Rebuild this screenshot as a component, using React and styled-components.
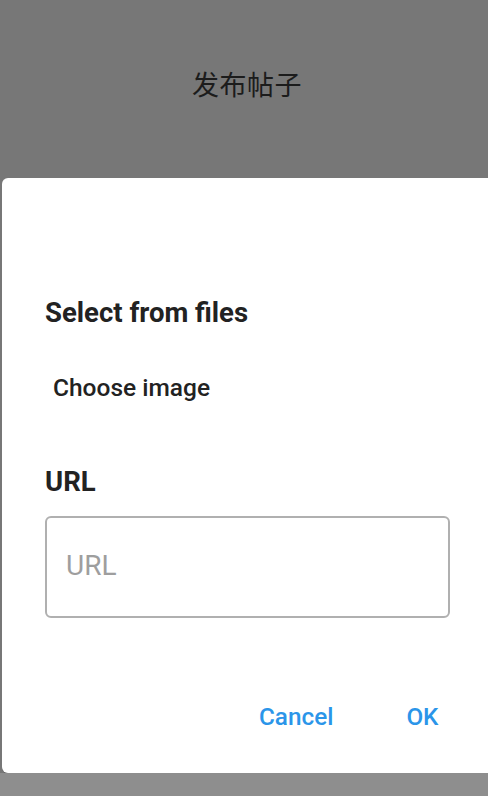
import React from 'react';
import styled, { createGlobalStyle } from 'styled-components';

const GlobalStyle = createGlobalStyle`
  html, body {
    margin: 0;
    padding: 0;
    overflow: hidden;
  }
  body {
    font-family: Roboto, "Noto Sans CJK SC", sans-serif;
    background: #777777;
  }
`;

const Screen = styled.div`
  width: 488px;
  height: 796px;
  display: flex;
  flex-direction: column;
  background: #777777;
  overflow: hidden;
`;

const Header = styled.div`
  height: 178px;
  flex: none;
  display: flex;
  align-items: center;
  justify-content: center;
  padding: 0 0 12px 6px;
  box-sizing: border-box;
`;

const HeaderTitle = styled.h1`
  margin: 0;
  font-family: "Noto Sans CJK SC", sans-serif;
  font-weight: 400;
  font-size: 27px;
  color: #1c1c1c;
  letter-spacing: 0.5px;
`;

const Dialog = styled.div`
  flex: none;
  height: 595px;
  margin-left: 2px;
  width: 500px;
  background: #ffffff;
  border-radius: 6px;
  box-sizing: border-box;
  padding: 120px 0 0 43px;
  display: flex;
  flex-direction: column;
  box-shadow: 0 1px 0 rgba(0, 0, 0, 0.15);
`;

const SectionTitle = styled.h2`
  margin: ${p => p.$top || 0}px 0 0 0;
  font-size: 27.5px;
  font-weight: 700;
  color: #222222;
  line-height: 30px;
`;

const ChooseButton = styled.button`
  align-self: flex-start;
  margin: 45px 0 0 0;
  padding: 0 0 0 8px;
  border: none;
  background: none;
  font-family: Roboto, sans-serif;
  font-size: 24.5px;
  font-weight: 500;
  color: #222222;
  line-height: 30px;
`;

const UrlInput = styled.input`
  margin-top: 19px;
  width: 405px;
  height: 102px;
  box-sizing: border-box;
  border: 2px solid #b0b0b0;
  border-radius: 6px;
  padding: 0 0 4px 19px;
  font-family: Roboto, sans-serif;
  font-size: 28px;
  color: #222;
  outline: none;

  &::placeholder {
    color: #9e9e9e;
  }
`;

const Actions = styled.div`
  display: flex;
  gap: 73px;
  margin: 84px 0 0 214px;
`;

const ActionButton = styled.button`
  border: none;
  background: none;
  padding: 0;
  font-family: Roboto, sans-serif;
  font-size: 24.3px;
  font-weight: 500;
  color: #2b95e9;
  line-height: 30px;
`;

const Backdrop = styled.div`
  flex: 1;
  background: #8e8e8e;
`;

export default function App() {
  return (
    <>
      <GlobalStyle />
      <Screen>
        <Header>
          <HeaderTitle>发布帖子</HeaderTitle>
        </Header>
        <Dialog>
          <SectionTitle>Select from files</SectionTitle>
          <ChooseButton>Choose image</ChooseButton>
          <SectionTitle $top={64}>URL</SectionTitle>
          <UrlInput placeholder="URL" />
          <Actions>
            <ActionButton>Cancel</ActionButton>
            <ActionButton>OK</ActionButton>
          </Actions>
        </Dialog>
        <Backdrop />
      </Screen>
    </>
  );
}
